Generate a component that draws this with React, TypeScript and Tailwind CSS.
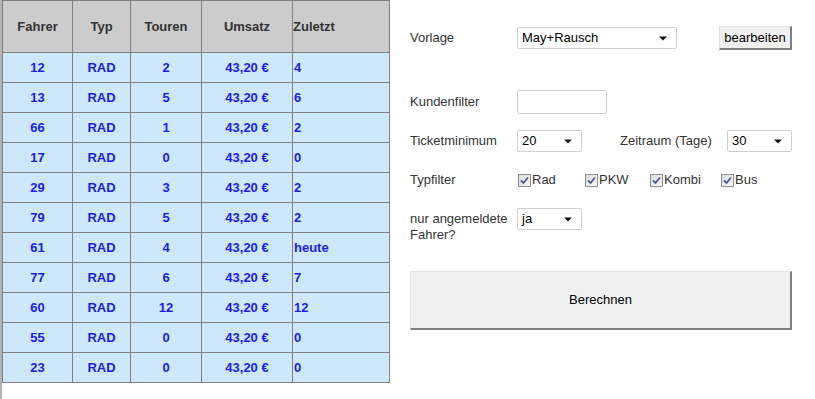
const rows = [
  { fahrer: '12', touren: '2', zuletzt: '4' },
  { fahrer: '13', touren: '5', zuletzt: '6' },
  { fahrer: '66', touren: '1', zuletzt: '2' },
  { fahrer: '17', touren: '0', zuletzt: '0' },
  { fahrer: '29', touren: '3', zuletzt: '2' },
  { fahrer: '79', touren: '5', zuletzt: '2' },
  { fahrer: '61', touren: '4', zuletzt: 'heute' },
  { fahrer: '77', touren: '6', zuletzt: '7' },
  { fahrer: '60', touren: '12', zuletzt: '12' },
  { fahrer: '55', touren: '0', zuletzt: '0' },
  { fahrer: '23', touren: '0', zuletzt: '0' },
]

const headers = ['Fahrer', 'Typ', 'Touren', 'Umsatz']

function Arrow() {
  return (
    <svg width="8" height="5" viewBox="0 0 8 5" className="shrink-0">
      <path d="M0 0.5 L8 0.5 L4 4.5 Z" fill="#111" />
    </svg>
  )
}

function FakeSelect({ value, width }: { value: string; width: string }) {
  return (
    <div
      className={`${width} flex h-[22px] items-center justify-between rounded-[2px] border border-[#cfcfcf] bg-white pl-[4px] pr-[9px] text-[13px] text-black`}
    >
      <span>{value}</span>
      <Arrow />
    </div>
  )
}

function Check({ label, width }: { label: string; width: string }) {
  return (
    <label className={`${width} flex items-center gap-[1px] text-[13px] text-[#333]`}>
      <span className="flex h-[13px] w-[13px] items-center justify-center border border-[#8e8f8f] bg-gradient-to-br from-[#dcdcdc] to-[#f8f8f8]">
        <svg width="9" height="9" viewBox="0 0 9 9">
          <path d="M1 4.5 L3.5 7 L8 1.5" stroke="#4a5b8f" strokeWidth="1.8" fill="none" />
        </svg>
      </span>
      {label}
    </label>
  )
}

export default function App() {
  return (
    <div
      className="flex min-h-screen bg-white"
      style={{ fontFamily: '"Liberation Sans", Arial, sans-serif' }}
    >
      {/* left table */}
      <div className="flex min-h-screen border-l-2 border-[#b4b4b4]">
        <div className="h-fit border-l border-t border-[#808080]">
          <div className="grid grid-cols-[70px_58px_71px_91px_97px]">
            {headers.map((h) => (
              <div
                key={h}
                className="flex h-[52px] items-center justify-center border-b border-r border-[#808080] bg-[#cccccc] text-[13px] font-bold text-[#333]"
              >
                {h}
              </div>
            ))}
            <div className="flex h-[52px] items-center border-b border-r border-[#808080] bg-[#cccccc] text-[13px] font-bold text-[#333]">
              Zuletzt
            </div>
            {rows.map((r, i) => (
              <div key={i} className="contents text-[13px] font-bold text-[#1c1ce8]">
                <div className="flex h-[30px] items-center justify-center border-b border-r border-[#808080] bg-[#cce8fa]">
                  {r.fahrer}
                </div>
                <div className="flex h-[30px] items-center justify-center border-b border-r border-[#808080] bg-[#cce8fa]">
                  RAD
                </div>
                <div className="flex h-[30px] items-center justify-center border-b border-r border-[#808080] bg-[#cce8fa]">
                  {r.touren}
                </div>
                <div className="flex h-[30px] items-center justify-center border-b border-r border-[#808080] bg-[#cce8fa]">
                  43,20 €
                </div>
                <div className="flex h-[30px] items-center border-b border-r border-[#808080] bg-[#cce8fa] pl-px">
                  {r.zuletzt}
                </div>
              </div>
            ))}
          </div>
        </div>
      </div>

      {/* right form */}
      <div className="ml-[20px] flex w-[382px] flex-col text-[13px] text-[#333]">
        <div className="mt-[26px] flex h-[24px] items-center">
          <span className="w-[107px]">Vorlage</span>
          <FakeSelect value="May+Rausch" width="w-[160px]" />
          <button className="ml-auto h-[24px] w-[73px] border-l border-t border-b-2 border-r-2 border-l-[#e4e4e4] border-t-[#e4e4e4] border-b-[#808080] border-r-[#808080] bg-[#f0f0f0] text-[13px] text-black">
            bearbeiten
          </button>
        </div>

        <div className="mt-[40px] flex h-[24px] items-center">
          <span className="w-[107px]">Kundenfilter</span>
          <div className="h-[24px] w-[90px] rounded-[2px] border border-[#cfcfcf] bg-white" />
        </div>

        <div className="mt-[16px] flex h-[22px] items-center">
          <span className="w-[107px]">Ticketminimum</span>
          <FakeSelect value="20" width="w-[65px]" />
          <span className="ml-[38px] w-[107px]">Zeitraum (Tage)</span>
          <FakeSelect value="30" width="w-[65px]" />
        </div>

        <div className="mt-[18px] flex h-[20px] items-center">
          <span className="w-[107px]">Typfilter</span>
          <div className="flex pl-px">
            <Check label="Rad" width="w-[67px]" />
            <Check label="PKW" width="w-[65px]" />
            <Check label="Kombi" width="w-[71px]" />
            <Check label="Bus" width="w-[60px]" />
          </div>
        </div>

        <div className="mt-[18px] flex items-start">
          <span className="w-[107px] pr-[6px] pt-[3px] leading-[16px]">nur angemeldete Fahrer?</span>
          <FakeSelect value="ja" width="w-[65px]" />
        </div>

        <button className="mt-[28px] h-[59px] w-full border-l border-t border-b-2 border-r-2 border-l-[#e4e4e4] border-t-[#e4e4e4] border-b-[#808080] border-r-[#808080] bg-[#f0f0f0] text-[13px] text-black">
          Berechnen
        </button>
      </div>
    </div>
  )
}
